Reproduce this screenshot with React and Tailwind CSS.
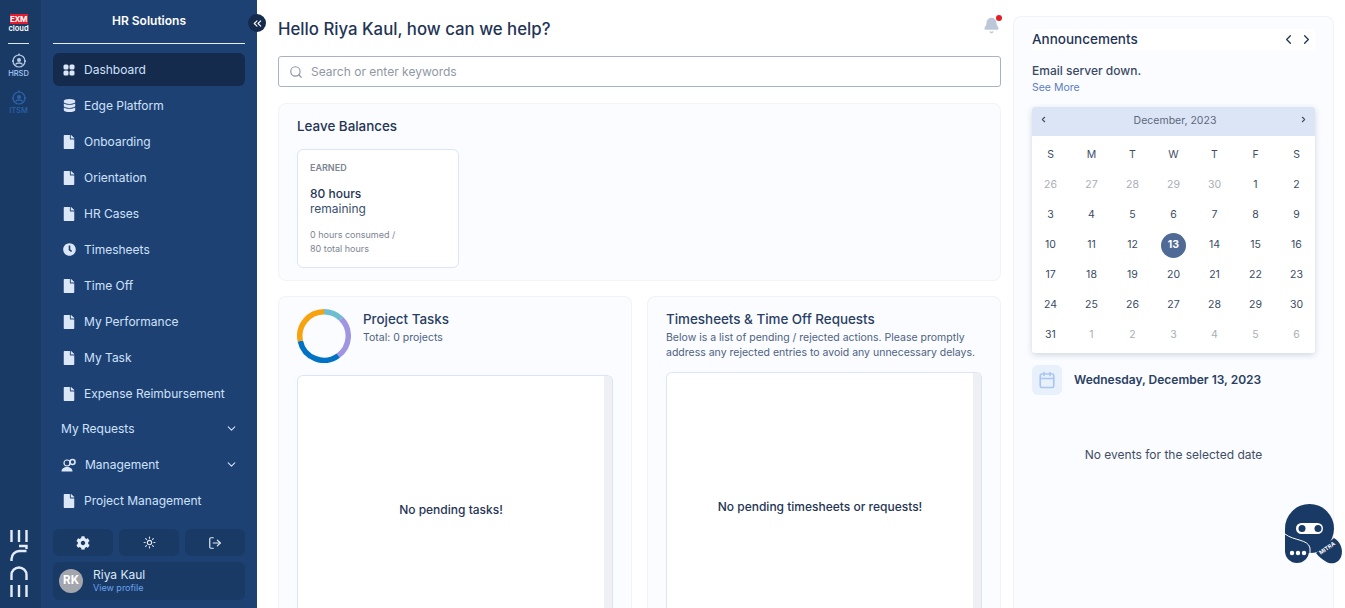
import React from "react";
import {
  ChevronDown,
  ChevronLeft,
  ChevronRight,
  ChevronsLeft,
  Sun,
  LogOut,
  Search,
  Bell,
  Calendar,
} from "lucide-react";
import { FaCog, FaClock, FaDatabase, FaFile } from "react-icons/fa";

const navItems = [
  { label: "Dashboard", icon: "grid", active: true },
  { label: "Edge Platform", icon: "db" },
  { label: "Onboarding" },
  { label: "Orientation" },
  { label: "HR Cases" },
  { label: "Timesheets", icon: "clock" },
  { label: "Time Off" },
  { label: "My Performance" },
  { label: "My Task" },
  { label: "Expense Reimbursement" },
];

const weeks = [
  [26, 27, 28, 29, 30, 1, 2],
  [3, 4, 5, 6, 7, 8, 9],
  [10, 11, 12, 13, 14, 15, 16],
  [17, 18, 19, 20, 21, 22, 23],
  [24, 25, 26, 27, 28, 29, 30],
  [31, 1, 2, 3, 4, 5, 6],
];

function NavIcon({ icon }) {
  if (icon === "grid") {
    return (
      <svg width="12" height="12" viewBox="0 0 12 12" className="text-[#dbe7f7]">
        <rect x="0.5" y="0.5" width="5" height="5" rx="1.500" fill="currentColor" />
        <rect x="6.5" y="0.5" width="5" height="5" rx="1.500" fill="currentColor" />
        <rect x="0.5" y="6.5" width="5" height="5" rx="1.500" fill="currentColor" />
        <rect x="6.5" y="6.5" width="5" height="5" rx="1.500" fill="currentColor" />
      </svg>
    );
  }
  if (icon === "db") return <FaDatabase size={13} className="text-[#dbe7f7]" />;
  if (icon === "clock") return <FaClock size={13} className="text-[#dbe7f7]" />;
  return <FaFile size={14} className="text-[#dbe7f7]" />;
}

function NavItem({ label, icon, active }) {
  return (
    <div
      className={`flex items-center h-[33px] mb-[3px] pl-[8px] gap-[7px] rounded-md text-[12px] text-[#cfe2fb] ${
        active ? "bg-[#152b4e]" : ""
      }`}
    >
      <span className="w-[16px] flex justify-center">
        <NavIcon icon={icon} />
      </span>
      <span className="pt-[1px]">{label}</span>
    </div>
  );
}

function OrbIcon({ color }) {
  return (
    <svg width="16" height="16" viewBox="0 0 16 16" fill="none" stroke={color}>
      <circle cx="8" cy="8" r="6" strokeWidth="1.2" />
      <circle cx="8" cy="7" r="2" fill={color} stroke="none" />
      <path d="M4.500 11.500c1-2 6-2 7 0" strokeWidth="1.400" />
      <circle cx="8" cy="1.500" r="1" fill={color} stroke="none" />
      <circle cx="2" cy="8" r="1" fill={color} stroke="none" />
      <circle cx="14" cy="8" r="1" fill={color} stroke="none" />
    </svg>
  );
}

function Rail() {
  return (
    <div className="w-[41px] shrink-0 bg-[#1a3a66] flex flex-col items-center pt-[14px] pb-[11px] pr-[4px]">
      <div className="w-[18px] h-[10px] bg-[#e11d2e] text-white text-[8px] leading-[10px] font-bold text-center tracking-tighter">
        EXM
      </div>
      <div className="text-white text-[7.5px] leading-[8px] font-semibold mt-[1px]">cloud</div>
      <div className="w-[21px] h-px bg-[#dbe7f7] mt-[10px] mb-[9px]" />
      <OrbIcon color="#b6c9e4" />
      <div className="text-[#a5c8f5] text-[7.5px] leading-[11px] mt-[-1px] font-medium">HRSD</div>
      <div className="mt-[11px]">
        <OrbIcon color="#2a62a8" />
      </div>
      <div className="text-[#2a62a8] text-[7.5px] leading-[11px] mt-[-1px] font-medium">ITSM</div>
      <svg width="18" height="67" viewBox="0 0 18 67" className="mt-auto text-[#e3ecf8]" fill="none" stroke="currentColor" strokeWidth="2.400">
        <path d="M1.500 0v12M9 0v12M16.500 0v12" />
        <path d="M9 16h7.500v3" />
        <path d="M1.500 31v-2a8 8 0 0 1 8-8h7" />
        <path d="M1.500 50v-5a7.500 7.500 0 0 1 15 0v5" />
        <path d="M1.500 55v12M9 55v12M16.500 55v12" />
      </svg>
    </div>
  );
}

function Sidebar() {
  return (
    <div className="relative w-[216px] shrink-0 bg-[#1e4174] flex flex-col px-[12px]">
      <div className="h-[44px] mb-[9px] border-b border-[#e6eef9] flex items-center justify-center pb-[1px] text-white text-[12px] font-semibold">
        HR Solutions
      </div>
      {navItems.map((item) => (
        <NavItem key={item.label} {...item} />
      ))}
      <div className="flex items-center justify-between h-[33px] mb-[3px] -mt-[1px] pl-[8px] pr-[7px] text-[12px] text-[#cfe2fb]">
        <span>My Requests</span>
        <ChevronDown size={13} />
      </div>
      <div className="flex items-center h-[33px] mb-[3px] pl-[8px] pr-[7px] gap-[9px] text-[12px] text-[#cfe2fb]">
        <svg width="15" height="14" viewBox="0 0 15 14" className="text-[#dbe7f7]">
          <circle cx="6" cy="5" r="3" fill="none" stroke="currentColor" strokeWidth="1.200" />
          <circle cx="11.500" cy="4" r="2.500" fill="none" stroke="currentColor" strokeWidth="1.600" />
          <path d="M0.500 13.500c0-3 2.500-4.500 5.500-4.500s5.500 1.500 5.500 4.500z" fill="currentColor" />
        </svg>
        <span className="flex-1">Management</span>
        <ChevronDown size={13} />
      </div>
      <NavItem label="Project Management" />

      <div className="mt-auto flex gap-[6px] mb-[6px]">
        <div className="flex-1 h-[27px] rounded-md bg-[#1a3a66] flex items-center justify-center">
          <FaCog size={14} className="text-[#e3ecf8]" />
        </div>
        <div className="flex-1 h-[27px] rounded-md bg-[#1a3a66] flex items-center justify-center">
          <Sun size={13} className="text-[#e3ecf8]" />
        </div>
        <div className="flex-1 h-[27px] rounded-md bg-[#1a3a66] flex items-center justify-center">
          <LogOut size={14} className="text-[#e3ecf8]" />
        </div>
      </div>
      <div className="h-[38px] mb-[8px] rounded-md bg-[#1a3a66] flex items-center pl-[6px] gap-[10px]">
        <div className="w-[24px] h-[24px] rounded-full bg-[#a3a7ad] text-white text-[11.500px] font-bold flex items-center justify-center">
          RK
        </div>
        <div className="mb-[2px]">
          <div className="text-[#dbe7f7] text-[12px] leading-[14px]">Riya Kaul</div>
          <div className="text-[#69a4ee] text-[9px] leading-[11px]">View profile</div>
        </div>
      </div>

      <div className="absolute right-[-9px] top-[14px] w-[18px] h-[18px] rounded-full bg-[#152b4e] flex items-center justify-center">
        <ChevronsLeft size={13} className="text-white" />
      </div>
    </div>
  );
}

function Donut() {
  return (
    <svg width="54" height="54" viewBox="0 0 54 54" fill="none" strokeWidth="5.500">
      <path d="M27 2.750A24.250 24.250 0 0 1 44.100 9.800" stroke="#6fbdd0" />
      <path d="M44.100 9.800A24.250 24.250 0 0 1 41.300 46.600" stroke="#9f95e2" />
      <path d="M41.300 46.600A24.250 24.250 0 0 1 3.300 32" stroke="#0273c4" />
      <path d="M3.300 32A24.250 24.250 0 0 1 27 2.750" stroke="#f6a30f" />
    </svg>
  );
}

function EmptyBox({ text }) {
  return (
    <div className="h-[268px] shrink-0 rounded-t-md border border-b-0 border-[#dbe5f5] bg-white flex overflow-hidden">
      <div className="flex-1 flex items-center justify-center text-[12px] font-medium text-[#1f3555]">
        {text}
      </div>
      <div className="w-[8px] bg-[#eff0f4]" />
    </div>
  );
}

function Main() {
  return (
    <div className="w-[744px] shrink-0 pl-[21px] flex flex-col h-full">
      <div className="flex items-center justify-between h-[56px] pt-[3px]">
        <div className="text-[16.800px] font-medium text-[#1f3555]">Hello Riya Kaul, how can we help?</div>
        <div className="relative mr-[1px] mb-[8px]">
          <Bell size={17} fill="#bcc7d8" className="text-[#bcc7d8]" />
          <span className="absolute right-[-2px] top-[-2px] w-[6px] h-[6px] rounded-full bg-[#e21f26]" />
        </div>
      </div>
      <div className="h-[31px] border border-[#a8b3c2] rounded-[3px] flex items-center pl-[10px] gap-[8px] mb-[16px]">
        <Search size={14} className="text-[#8b95a3]" />
        <span className="text-[12px] text-[#8f98a5]">Search or enter keywords</span>
      </div>
      <div className="h-[178px] shrink-0 rounded-lg border border-[#f1f3f8] bg-[#fafcff] px-[18px] pt-[14px] mb-[15px]">
        <div className="text-[13.400px] font-medium text-[#1f3555] leading-[16px] mb-[15px]">Leave Balances</div>
        <div className="w-[162px] h-[119px] rounded-md border border-[#dbe5f5] bg-white pl-[12px] pt-[13px]">
          <div className="text-[9px] font-semibold text-[#7c8592] leading-[10px]">EARNED</div>
          <div className="text-[12px] font-medium text-[#1f3555] leading-[15px] mt-[13px]">80 hours</div>
          <div className="text-[12px] text-[#3a5070] leading-[15px]">remaining</div>
          <div className="text-[9px] text-[#7c8592] leading-[14px] mt-[12px]">
            0 hours consumed /<br />80 total hours
          </div>
        </div>
      </div>
      <div className="flex-1 min-h-0 flex gap-[15px]">
        <div className="w-[354px] rounded-t-lg border border-b-0 border-[#f1f3f8] bg-[#fafcff] px-[18px] pt-[12px] flex flex-col">
          <div className="flex gap-[12px] h-[66px] shrink-0">
            <Donut />
            <div className="pt-[2px]">
              <div className="text-[13.400px] font-medium text-[#2a3f63] leading-[16px]">Project Tasks</div>
              <div className="text-[10.500px] text-[#4f627f] leading-[14px] mt-[4px]">Total: 0 projects</div>
            </div>
          </div>
          <EmptyBox text="No pending tasks!" />
        </div>
        <div className="w-[354px] rounded-t-lg border border-b-0 border-[#f1f3f8] bg-[#fafcff] px-[18px] pt-[14px] flex flex-col">
          <div className="h-[61px] shrink-0">
            <div className="text-[13.400px] font-medium text-[#2a3f63] leading-[16px]">Timesheets &amp; Time Off Requests</div>
            <div className="text-[10.500px] text-[#4f627f] leading-[14.500px] mt-[4px]">
              Below is a list of pending / rejected actions. Please promptly address any rejected entries to avoid any unnecessary delays.
            </div>
          </div>
          <EmptyBox text="No pending timesheets or requests!" />
        </div>
      </div>
    </div>
  );
}

function Announcements() {
  return (
    <div className="w-[321px] ml-[12px] shrink-0 h-full rounded-t-lg border border-b-0 border-[#f1f3f8] bg-[#fafcff] px-[18px] pt-[12px] flex flex-col">
      <div className="bg-white h-[21px] flex items-center justify-between pr-[1px] shrink-0">
        <span className="text-[13.500px] font-medium text-[#1f3555]">Announcements</span>
        <span className="flex gap-[3px] text-[#1f3555]">
          <ChevronLeft size={15} />
          <ChevronRight size={15} />
        </span>
      </div>
      <div className="text-[12px] font-medium text-[#3a4a63] leading-[14px] mt-[14px]">Email server down.</div>
      <div className="text-[10.500px] text-[#5a7cc4] leading-[14px] mt-[3px]">See More</div>
      <div className="mt-[12px] h-[246px] rounded-[3px] bg-white shadow-[0_2px_6px_rgba(30,50,90,0.18)] shrink-0">
        <div className="h-[29px] bg-[#dbe5f5] rounded-t-[3px] flex items-center justify-between px-[7px] pb-[2px]">
          <ChevronLeft size={9} strokeWidth={3} className="text-[#3f4e66] mb-[3px]" />
          <span className="text-[10.500px] text-[#5b6880] pl-[3px]">December, 2023</span>
          <ChevronRight size={9} strokeWidth={3} className="text-[#3f4e66] mb-[3px]" />
        </div>
        <div className="-mx-[2px] grid grid-cols-7 h-[34px] items-center pt-[4px] text-center text-[10.500px] text-[#3f4e66]">
          {["S", "M", "T", "W", "T", "F", "S"].map((d, i) => (
            <span key={i}>{d}</span>
          ))}
        </div>
        {weeks.map((week, w) => (
          <div key={w} className="-mx-[2px] grid grid-cols-7 h-[30px] items-center text-center text-[10.500px]">
            {week.map((day, d) => {
              const muted = (w === 0 && day > 20) || (w === 5 && day < 20);
              const today = w === 2 && day === 13;
              if (today) {
                return (
                  <span key={d} className="flex justify-center">
                    <span className="w-[25px] h-[25px] rounded-full bg-[#4f6a94] text-white font-bold flex items-center justify-center">
                      {day}
                    </span>
                  </span>
                );
              }
              return (
                <span key={d} className={muted ? "text-[#a9aeb6]" : "text-[#3a4a63]"}>
                  {day}
                </span>
              );
            })}
          </div>
        ))}
      </div>
      <div className="flex items-center gap-[12px] mt-[12px]">
        <div className="w-[30px] h-[30px] rounded-md bg-[#e8f0fc] flex items-center justify-center">
          <Calendar size={18} strokeWidth={2.200} className="text-[#a9c6f2]" />
        </div>
        <span className="text-[12px] font-semibold text-[#2a3f63]">Wednesday, December 13, 2023</span>
      </div>
      <div className="text-center text-[12px] text-[#3f4e66] mt-[51px]">No events for the selected date</div>
    </div>
  );
}

function Bot() {
  return (
    <svg width="60" height="62" viewBox="0 0 60 62" className="absolute left-[1284px] top-[503px]">
      <circle cx="25.500" cy="25.500" r="24.500" fill="#1a3a66" />
      <path fill="#1a3a66" d="M1 26V48A12 12 0 0 0 25 48V36z" />
      <path fill="#1a3a66" d="M32 50L50 35C56 38 60 47 57 54C54 61 46 62 41 58C38 56 35 54 32 50Z" />
      <path d="M1 31C10 38 24 36 26 45V50" stroke="#fff" strokeWidth="1" fill="none" />
      <rect x="12" y="20" width="27" height="11" rx="5.500" fill="#fff" />
      <circle cx="18" cy="25.500" r="3.500" fill="#1a3a66" />
      <circle cx="34" cy="25.500" r="3.500" fill="#1a3a66" />
      <circle cx="8" cy="50" r="2.200" fill="#fff" />
      <circle cx="14" cy="50" r="2.200" fill="#fff" />
      <circle cx="20" cy="50" r="2.200" fill="#fff" />
      <text x="43" y="47" textAnchor="middle" fontSize="5.500" fontWeight="700" fill="#fff" transform="rotate(-35 43 45)" fontFamily="Inter, sans-serif">
        MITRA
      </text>
    </svg>
  );
}

export default function App() {
  return (
    <div className="relative flex h-screen w-full overflow-hidden bg-white font-['Inter',sans-serif]">
      <Rail />
      <Sidebar />
      <Main />
      <div className="pt-[16px] h-full">
        <Announcements />
      </div>
      <Bot />
    </div>
  );
}
